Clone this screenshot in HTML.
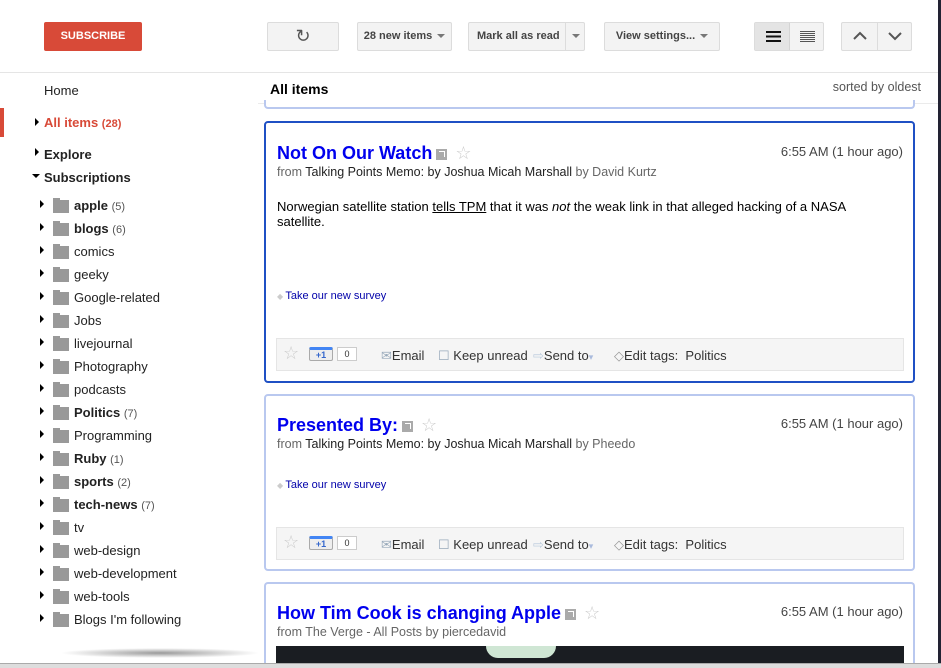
<!DOCTYPE html>
<html style="width:941px;height:668px;overflow:hidden"><head><meta charset="utf-8"><style>
*{margin:0;padding:0;box-sizing:border-box}
body{width:941px;height:668px;overflow:hidden;background:#fff;font-family:"Liberation Sans",Arial,sans-serif;position:relative;color:#222}
.a{position:absolute}
.btn{position:absolute;top:22px;height:29px;background:#f3f3f3;border:1px solid #dcdcdc;border-radius:2px;font-size:11px;font-weight:bold;color:#444;line-height:27px;text-align:center}
.caret{display:inline-block;width:0;height:0;border-left:4px solid transparent;border-right:4px solid transparent;border-top:4px solid #777;vertical-align:middle;margin-left:5px}
.tri{position:absolute;width:0;height:0;border-top:4px solid transparent;border-bottom:4px solid transparent;border-left:4px solid #000}
.fold{position:absolute;left:53px;width:16px;height:13px;background:#999}
.fold:before{content:"";position:absolute;left:0;top:-2px;width:7px;height:3px;background:#999}
.si{position:absolute;left:74px;font-size:13px;color:#222}
.si span{font-size:11px;color:#555}
.card{position:absolute;left:264px;width:651px;border:2px solid #b9c8ef;border-radius:4px;background:#fff}
.ttl{position:absolute;left:11px;font-size:18px;font-weight:bold;color:#0000ee}
.ext{display:inline-block;width:11px;height:11px;background:#aaa;vertical-align:middle;margin-left:4px;position:relative}
.ext:after{content:"";position:absolute;left:3px;top:2px;width:5px;height:5px;border-top:1.5px solid #fff;border-right:1.5px solid #fff}
.star{color:#ccc;font-size:18px;margin-left:8px;font-weight:normal}
.time{position:absolute;right:10px;font-size:13px;color:#444}
.from{position:absolute;left:11px;font-size:12.5px;color:#666}
.from i{font-style:normal;color:#222}
.sv{position:absolute;left:11px;font-size:11px;color:#00a}
.sv:before{content:"◆ ";color:#ccc;font-size:8px}
.foot{position:absolute;left:10px;width:628px;height:33px;background:#f5f5f5;border:1px solid #e5e5e5;font-size:13px;color:#333}
.foot .x{position:absolute;top:9px}
</style></head><body>
<div class="a" style="left:44px;top:22px;width:98px;height:29px;background:#d84a38;border-radius:2px;color:#fff;font-size:11px;font-weight:bold;line-height:29px;text-align:center">SUBSCRIBE</div>
<div class="btn" style="left:267px;width:72px;font-size:18px;color:#555;font-weight:normal">&#x21bb;</div>
<div class="btn" style="left:357px;width:95px">28 new items<span class="caret"></span></div>
<div class="btn" style="left:468px;width:117px;text-align:left;padding-left:8px">Mark all as read<span style="position:absolute;left:96px;top:0;height:27px;border-left:1px solid #dcdcdc;width:20px;text-align:center"><span class="caret" style="margin:0"></span></span></div>
<div class="btn" style="left:604px;width:116px">View settings...<span class="caret"></span></div>
<div class="btn" style="left:754px;width:70px;background:#f3f3f3"><div class="a" style="left:0;top:0;width:35px;height:27px;background:#e4e4e4;border-right:1px solid #d4d4d4"></div>
<div class="a" style="left:11px;top:8px;width:15px;height:11px;background:repeating-linear-gradient(#111 0 2px,transparent 2px 4.5px)"></div>
<div class="a" style="left:45px;top:8px;width:15px;height:11px;background:repeating-linear-gradient(#555 0 1px,transparent 1px 2px)"></div></div>
<div class="btn" style="left:841px;width:71px;color:#555;font-weight:normal"><div class="a" style="left:35px;top:0;height:27px;border-left:1px solid #dcdcdc"></div>
<svg class="a" style="left:11px;top:8px" width="14" height="10"><path d="M1 8L7 2L13 8" stroke="#555" stroke-width="2" fill="none"/></svg>
<svg class="a" style="left:46px;top:8px" width="14" height="10"><path d="M1 2L7 8L13 2" stroke="#555" stroke-width="2" fill="none"/></svg></div>
<div class="a" style="left:0;top:72px;width:941px;border-top:1px solid #e5e5e5"></div>
<div class="a" style="left:258px;top:103px;width:683px;border-top:1px solid #ebebeb"></div>
<div class="a" style="left:938px;top:0;width:3px;height:668px;background:#223;z-index:5"></div>

<div class="a" style="left:44px;top:83px;font-size:13px">Home</div>
<div class="a" style="left:0;top:108px;width:4px;height:29px;background:#d84a38"></div>
<div class="tri" style="left:35px;top:118px"></div>
<div class="a" style="left:44px;top:115px;font-size:13px;font-weight:bold;color:#d84a38">All items <span style="font-size:11px">(28)</span></div>
<div class="tri" style="left:35px;top:148px"></div>
<div class="a" style="left:44px;top:147px;font-size:13px;font-weight:bold">Explore</div>
<div class="a" style="left:32px;top:174px;width:0;height:0;border-left:4px solid transparent;border-right:4px solid transparent;border-top:4px solid #000"></div>
<div class="a" style="left:44px;top:170px;font-size:13px;font-weight:bold">Subscriptions</div>

<div id="subs"></div>
<script>
var L=[["apple","5",1],["blogs","6",1],["comics"],["geeky"],["Google-related"],["Jobs"],["livejournal"],["Photography"],["podcasts"],["Politics","7",1],["Programming"],["Ruby","1",1],["sports","2",1],["tech-news","7",1],["tv"],["web-design"],["web-development"],["web-tools"],["Blogs I'm following"]];
var h="";L.forEach(function(e,i){var y=205+i*23;h+='<div class="tri" style="left:40px;top:'+(y-5)+'px"></div><div class="fold" style="top:'+(y-5)+'px"></div><div class="si" style="top:'+(y-7)+'px">'+(e[2]?'<b>'+e[0]+'</b> <span>('+e[1]+')</span>':e[0])+'</div>';});
document.getElementById("subs").innerHTML=h;
</script>
<div class="a" style="left:60px;top:648px;width:200px;height:10px;background:radial-gradient(ellipse at center,#999 0%,rgba(200,200,200,0) 70%)"></div>

<div class="a" style="left:270px;top:81px;font-size:14px;font-weight:bold;color:#000">All items</div>
<div class="a" style="right:20px;top:80px;font-size:12.5px;color:#555">sorted by oldest</div>
<div class="card" style="top:100px;height:9px;border-top:none;border-radius:0 0 4px 4px"></div>

<div class="card" style="top:121px;height:262px;border-color:#1f50c4">
<div class="ttl" style="top:20px">Not On Our Watch<span class="ext"></span><span class="star">☆</span></div>
<div class="time" style="top:21px">6:55 AM (1 hour ago)</div>
<div class="from" style="top:42px">from <i>Talking Points Memo: by Joshua Micah Marshall</i> by David Kurtz</div>
<div class="a" style="left:11px;top:76px;font-size:13px;color:#000;width:600px;line-height:15px">Norwegian satellite station <u>tells TPM</u> that it was <i>not</i> the weak link in that alleged hacking of a NASA satellite.</div>
<div class="sv" style="top:167px">Take our new survey</div>
<div class="foot" style="top:215px"><span class="x" style="left:6px;top:4px;color:#ccc;font-size:18px">☆</span>
<span class="x" style="left:32px;top:8px;width:24px;height:14px;border:1px solid #aaa;border-top:3px solid #4285f4;border-radius:2px;font-size:9px;font-weight:bold;color:#36c;text-align:center;line-height:10px;background:#eee">+1</span>
<span class="x" style="left:60px;top:8px;width:20px;height:14px;border:1px solid #ccc;font-size:9px;text-align:center;line-height:12px;background:#fff">0</span>
<span class="x" style="left:104px"><span style="color:#9ab">✉</span>Email</span><span class="x" style="left:161px"><span style="color:#9ab">☐</span> Keep unread</span><span class="x" style="left:256px"><span style="color:#bcd">⇨</span>Send to<span style="color:#abd;font-size:9px">▾</span></span><span class="x" style="left:337px"><span style="color:#999">◇</span>Edit tags:&nbsp; Politics</span></div>
</div>

<div class="card" style="top:394px;height:177px">
<div class="ttl" style="top:19px">Presented By:<span class="ext"></span><span class="star">☆</span></div>
<div class="time" style="top:20px">6:55 AM (1 hour ago)</div>
<div class="from" style="top:41px">from <i>Talking Points Memo: by Joshua Micah Marshall</i> by Pheedo</div>
<div class="sv" style="top:83px">Take our new survey</div>
<div class="foot" style="top:131px"><span class="x" style="left:6px;top:4px;color:#ccc;font-size:18px">☆</span>
<span class="x" style="left:32px;top:8px;width:24px;height:14px;border:1px solid #aaa;border-top:3px solid #4285f4;border-radius:2px;font-size:9px;font-weight:bold;color:#36c;text-align:center;line-height:10px;background:#eee">+1</span>
<span class="x" style="left:60px;top:8px;width:20px;height:14px;border:1px solid #ccc;font-size:9px;text-align:center;line-height:12px;background:#fff">0</span>
<span class="x" style="left:104px"><span style="color:#9ab">✉</span>Email</span><span class="x" style="left:161px"><span style="color:#9ab">☐</span> Keep unread</span><span class="x" style="left:256px"><span style="color:#bcd">⇨</span>Send to<span style="color:#abd;font-size:9px">▾</span></span><span class="x" style="left:337px"><span style="color:#999">◇</span>Edit tags:&nbsp; Politics</span></div>
</div>

<div class="card" style="top:582px;height:81px;border-bottom:none;border-radius:4px 4px 0 0;overflow:hidden">
<div class="ttl" style="top:19px">How Tim Cook is changing Apple<span class="ext"></span><span class="star">☆</span></div>
<div class="time" style="top:20px">6:55 AM (1 hour ago)</div>
<div class="from" style="top:41px">from The Verge - All Posts by piercedavid</div>
<div class="a" style="left:10px;top:62px;width:628px;height:20px;background:#1a1d22;overflow:hidden"><div class="a" style="left:210px;top:0;width:70px;height:12px;background:#cfe6d4;border-radius:0 0 40px 40px"></div></div>
</div>
<div class="a" style="left:0;top:663px;width:941px;height:5px;background:#ddd;border-top:1px solid #aaa;z-index:6"></div>
</body></html>
